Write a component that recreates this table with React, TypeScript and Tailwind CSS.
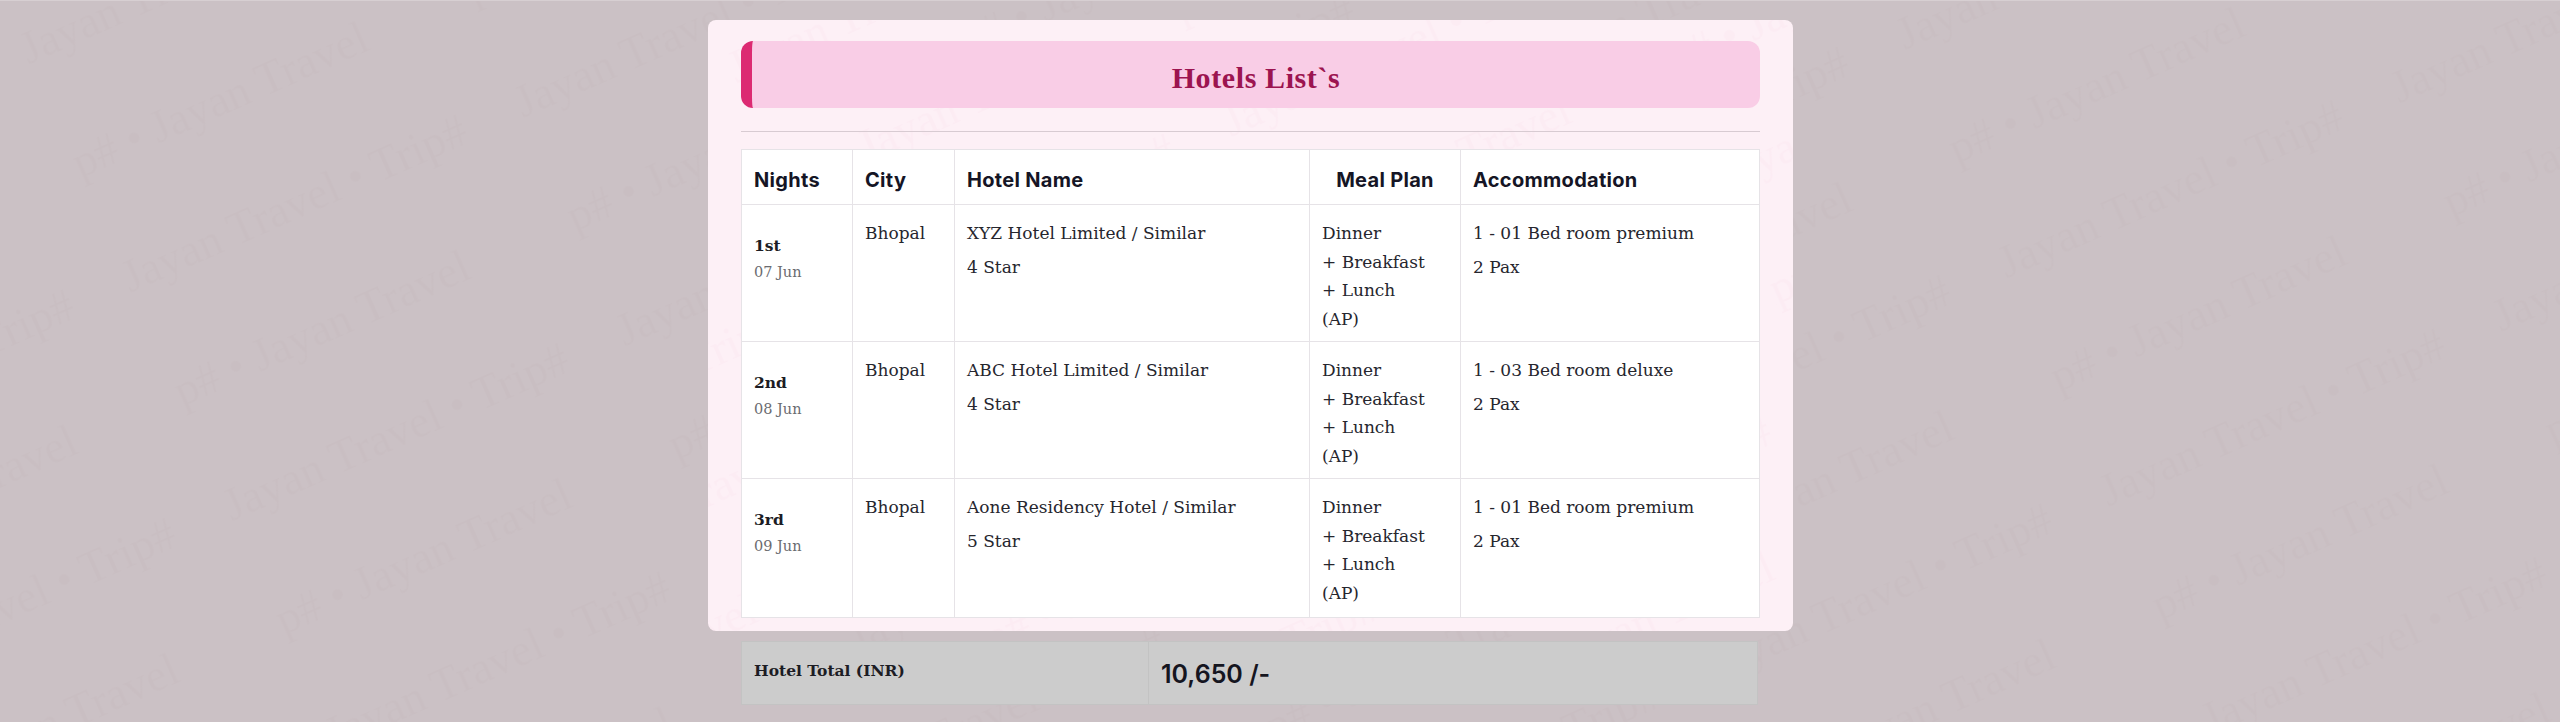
import React from "react"

const serif = "font-['DejaVu_Serif','Liberation_Serif',serif]"
const sans = "font-['Inter','Noto_Sans',sans-serif]"

type Stay = {
  night: string
  date: string
  city: string
  hotel: string
  stars: string
  meals: string[]
  room: string
  pax: string
  tall?: boolean
}

const stays: Stay[] = [
  {
    night: "1st",
    date: "07 Jun",
    city: "Bhopal",
    hotel: "XYZ Hotel Limited / Similar",
    stars: "4 Star",
    meals: ["Dinner", "+ Breakfast", "+ Lunch", "(AP)"],
    room: "1 - 01 Bed room premium",
    pax: "2 Pax",
  },
  {
    night: "2nd",
    date: "08 Jun",
    city: "Bhopal",
    hotel: "ABC Hotel Limited / Similar",
    stars: "4 Star",
    meals: ["Dinner", "+ Breakfast", "+ Lunch", "(AP)"],
    room: "1 - 03 Bed room deluxe",
    pax: "2 Pax",
  },
  {
    night: "3rd",
    date: "09 Jun",
    city: "Bhopal",
    hotel: "Aone Residency Hotel / Similar",
    stars: "5 Star",
    meals: ["Dinner", "+ Breakfast", "+ Lunch", "(AP)"],
    room: "1 - 01 Bed room premium",
    pax: "2 Pax",
    tall: true,
  },
]

function Watermark({ id, color }: { id: string; color: string }) {
  // faint repeated brand text behind the content
  return (
    <svg className="pointer-events-none absolute inset-0 h-full w-full" aria-hidden>
      <defs>
        <pattern
          id={id}
          width="430"
          height="250"
          patternUnits="userSpaceOnUse"
          patternTransform="rotate(-24)"
        >
          <text x="0" y="70" fontFamily="Liberation Serif, serif" fontSize="46" fill={color}>
            Jayan Travel • Trip#
          </text>
          <text x="-210" y="195" fontFamily="Liberation Serif, serif" fontSize="46" fill={color}>
            Travel • Trip# • Jayan Travel
          </text>
        </pattern>
      </defs>
      <rect width="100%" height="100%" fill={`url(#${id})`} />
    </svg>
  )
}

export default function App() {
  return (
    <div className="relative min-h-[722px] overflow-hidden border-t border-[#d7cfd2] bg-[#cbc1c5]">
      <Watermark id="wm-page" color="rgba(120,80,100,0.022)" />

      <div className="relative pl-[708px] pt-[19px]">
        <div className="relative w-[1085px] overflow-hidden rounded-lg bg-[#fdf0f6] px-[33px] pb-[13px] pt-[21px]">
          <Watermark id="wm-card" color="rgba(215,120,160,0.035)" />

          <div className="relative">
            <div className="flex h-[67px] items-center justify-center rounded-xl border-l-[11px] border-[#dc2a72] bg-[#f9cde6]">
              <h2 className="pt-[5px] font-['Liberation_Serif',serif] text-[30px] font-bold tracking-[0.6px] text-[#9c1450]">
                Hotels List`s
              </h2>
            </div>

            <div className="mt-[23px] h-px bg-[#d8cbd2]" />

            <table className="mt-[17px] w-full table-fixed border-collapse bg-white text-[#26262e]">
              <colgroup>
                <col className="w-[111px]" />
                <col className="w-[102px]" />
                <col className="w-[355px]" />
                <col className="w-[151px]" />
                <col />
              </colgroup>
              <thead>
                <tr className={`${sans} text-[20px] font-bold tracking-[0.3px] text-[#151525]`}>
                  <th className="h-[55px] border border-[#e6e3e7] px-3 pt-[5px] text-left">Nights</th>
                  <th className="border border-[#e6e3e7] px-3 pt-[5px] text-left">City</th>
                  <th className="border border-[#e6e3e7] px-3 pt-[5px] text-left">Hotel Name</th>
                  <th className="border border-[#e6e3e7] px-3 pt-[5px] text-center">Meal Plan</th>
                  <th className="border border-[#e6e3e7] px-3 pt-[5px] text-left">Accommodation</th>
                </tr>
              </thead>
              <tbody className={`${serif} text-[17px]`}>
                {stays.map((s) => (
                  <tr key={s.night}>
                    <td
                      className={`${s.tall ? "h-[139px]" : "h-[137px]"} border border-[#e6e3e7] px-3 pt-[29px] align-top`}
                    >
                      <div className="text-[15.5px] font-bold leading-6 text-[#1c1c24]">{s.night}</div>
                      <div className="mt-[4px] text-[14.5px] leading-5 text-[#6b6b70]">{s.date}</div>
                    </td>
                    <td className="border border-[#e6e3e7] px-3 pt-[14px] align-top leading-[28.7px]">
                      {s.city}
                    </td>
                    <td className="border border-[#e6e3e7] px-3 pt-[14px] align-top leading-[28.7px]">
                      <p className="mb-[5.5px]">{s.hotel}</p>
                      <p>{s.stars}</p>
                    </td>
                    <td className="border border-[#e6e3e7] px-3 pt-[14px] align-top leading-[28.7px]">
                      {s.meals.map((m) => (
                        <div key={m}>{m}</div>
                      ))}
                    </td>
                    <td className="border border-[#e6e3e7] px-3 pt-[14px] align-top leading-[28.7px]">
                      <p className="mb-[5.5px]">{s.room}</p>
                      <p>{s.pax}</p>
                    </td>
                  </tr>
                ))}
              </tbody>
            </table>
          </div>
        </div>

        <div className="ml-[33px] mt-[10px] grid h-[64px] w-[1017px] grid-cols-[407px_1fr] border border-[#c3c3c3] bg-[#cccccc]">
          <div className={`${serif} flex items-center border-r border-[#c3c3c3] px-3 pb-1 text-[15.5px] font-bold text-[#1c1c24]`}>
            Hotel Total (INR)
          </div>
          <div className={`${sans} flex items-center px-3 pt-[3px] text-[25px] font-semibold text-[#15151f]`}>
            10,650 /-
          </div>
        </div>
      </div>
    </div>
  )
}
